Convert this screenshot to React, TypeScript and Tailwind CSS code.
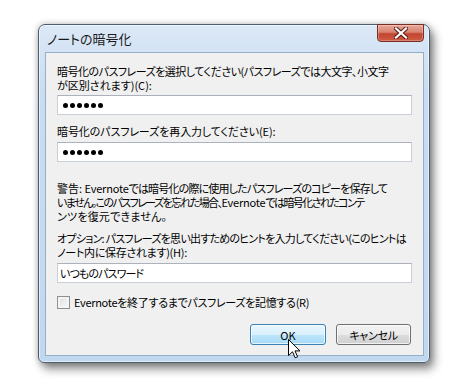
import React from 'react'

function PasswordDots() {
  return (
    <div className="flex items-center gap-[2px] pl-[5px] h-full">
      {[0, 1, 2, 3, 4, 5].map((i) => (
        <span key={i} className="w-[5px] h-[5px] rounded-full bg-black" />
      ))}
    </div>
  )
}

function TextBox({ children }: { children: React.ReactNode }) {
  return (
    <div className="w-full h-[20px] bg-white border border-[#c8cfd8] border-t-[#abb2bb] flex items-center">
      {children}
    </div>
  )
}

function CloseButton() {
  return (
    <div className="-mt-px w-[47px] h-[18px] rounded-b-[4px] border border-[#7a2d22] bg-[linear-gradient(to_bottom,#e9a99a_0%,#d8826f_45%,#c2452f_55%,#cf5b43_100%)] shadow-[inset_0_0_0_1px_rgba(255,255,255,0.25)] flex items-center justify-center">
      <svg width="14" height="12" viewBox="0 0 14 12">
        <path d="M2 1.5 L12 10.5 M12 1.5 L2 10.5" stroke="#5a1a12" strokeWidth="4.2" strokeLinecap="square" />
        <path d="M2 1.5 L12 10.5 M12 1.5 L2 10.5" stroke="#ffffff" strokeWidth="2.2" strokeLinecap="square" />
      </svg>
    </div>
  )
}

export default function App() {
  return (
    <div className="relative w-[470px] h-[389px] bg-white pl-[38px] pt-[24px] font-['Noto_Sans_CJK_JP',sans-serif] [font-feature-settings:'palt'] text-black">
      {/* Window frame */}
      <div className="w-[392px] h-[339px] flex flex-col rounded-t-[7px] rounded-b-[6px] border border-[#4d5d70] bg-[linear-gradient(to_bottom,#dbe8f6_0%,#c9ddf2_20%,#c0d8f0_100%)] shadow-[inset_0_0_0_1px_rgba(255,255,255,0.55),0_0_6px_rgba(0,0,0,0.25),4px_6px_10px_rgba(0,0,0,0.45)]">
        {/* Title bar */}
        <div className="h-[27px] flex items-start justify-between pr-[5px]">
          <div className="h-full flex items-center pl-[8px] text-[13px] leading-[14px] text-[#1b1b1b]">ノートの暗号化</div>
          <CloseButton />
        </div>

        {/* Client area */}
        <div className="flex-1 ml-[6px] mr-[5px] mb-[6px] border border-[#97aec7] bg-[#f0f0f0] flex flex-col pl-[11px] pr-[11px] pt-[11px] text-[11px] leading-[14px] whitespace-nowrap">
          <div className="tracking-[-0.5px]">暗号化のパスフレーズを選択してください(パスフレーズでは大文字、小文字</div>
          <div>が区別されます)(C):</div>
          <div className="mt-[3px]">
            <TextBox>
              <PasswordDots />
            </TextBox>
          </div>

          <div className="mt-[9px] tracking-[-0.1px]">暗号化のパスフレーズを再入力してください(E):</div>
          <div className="mt-[4px]">
            <TextBox>
              <PasswordDots />
            </TextBox>
          </div>

          <div className="mt-[19px] flex flex-col">
            <div className="tracking-[-0.83px]">
              <span className="tracking-normal">警告: </span>
              <span className="tracking-[-0.2px]">Evernote</span>
              では暗号化の際に使用したパスフレーズのコピーを保存して
            </div>
            <div className="tracking-[-1.6px]">
              いません。このパスフレーズを忘れた場合、
              <span className="tracking-[-0.2px]">Evernote</span>
              では暗号化されたコンテ
            </div>
            <div className="tracking-[0.2px]">ンツを復元できません。</div>
          </div>

          <div className="mt-[8px] flex flex-col">
            <div className="tracking-[-0.75px]">オプション: パスフレーズを思い出すためのヒントを入力してください(このヒントは</div>
            <div className="tracking-[-0.3px]">ノート内に保存されます)(H):</div>
          </div>
          <div className="mt-[4px]">
            <TextBox>
              <span className="pl-[2px] tracking-[-0.9px]">いつものパスワード</span>
            </TextBox>
          </div>

          <div className="mt-[12px] flex items-center gap-[4px]">
            <span className="w-[13px] h-[13px] border border-[#8e8f8f] bg-[linear-gradient(to_bottom_right,#dcdcdc,#fbfbfb)] shadow-[inset_0_0_0_2px_#f4f4f4]" />
            <span className="tracking-[-0.3px]">Evernoteを終了するまでパスフレーズを記憶する(R)</span>
          </div>

          <div className="mt-[15px] flex justify-end gap-[10px] pr-px">
            <button className="w-[76px] h-[21px] rounded-[3px] border border-[#3c7fb1] bg-[linear-gradient(to_bottom,#eaf6fd_0%,#d9f0fc_50%,#bee6fd_51%,#a7d9f5_100%)] shadow-[inset_0_0_0_1px_rgba(255,255,255,0.7)] text-[11px] leading-[14px] flex items-center justify-center">
              OK
            </button>
            <button className="w-[75px] h-[21px] rounded-[3px] border border-[#707070] bg-[linear-gradient(to_bottom,#f2f2f2_0%,#ebebeb_50%,#dddddd_51%,#cfcfcf_100%)] shadow-[inset_0_0_0_1px_rgba(255,255,255,0.7)] text-[11px] leading-[14px] tracking-[-0.3px] flex items-center justify-center">
              キャンセル
            </button>
          </div>
        </div>
      </div>

      {/* Mouse pointer */}
      <svg className="absolute left-[288px] top-[339px]" width="13" height="20" viewBox="0 0 13 20">
        <path d="M0.5 0.5 L0.5 16.5 L4.5 12.8 L7.2 18.8 L9.6 17.8 L7 11.9 L12 11.9 Z" fill="#ffffff" stroke="#000000" strokeWidth="1" strokeLinejoin="round" />
      </svg>
    </div>
  )
}
